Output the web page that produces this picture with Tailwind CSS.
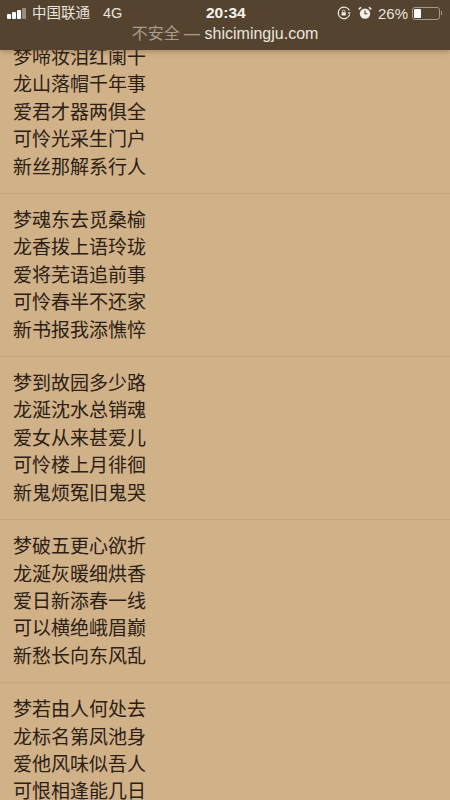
<!DOCTYPE html>
<html lang="zh-CN">
  <head>
    <meta charset="UTF-8" />
    <meta name="viewport" content="width=device-width, initial-scale=1.0" />
    <title>诗词名句</title>
    <script src="https://cdn.jsdelivr.net/npm/@tailwindcss/browser@4"></script>
  </head>
  <body class="bg-[#d1b188] font-['Noto_Sans_CJK_SC','Noto_Sans',sans-serif] antialiased">
    <div class="relative w-[450px] h-[800px] overflow-hidden">
      <!-- browser bar over the page -->
      <div class="absolute top-0 left-0 right-0 z-10 h-[50px] bg-[#54432f] text-[#e9e4dc] shadow-[0_2px_5px_rgba(70,50,30,0.3)]">
        <div class="relative flex items-center h-[26px] pl-[7px] pr-[8px] font-['Liberation_Sans','Noto_Sans_CJK_SC',sans-serif]">
          <div class="flex items-end gap-[1px] w-[20px] h-[12px]">
            <span class="w-[4px] h-[5px] bg-white rounded-[1px]"></span>
            <span class="w-[4px] h-[7px] bg-white rounded-[1px]"></span>
            <span class="w-[4px] h-[9px] bg-white rounded-[1px]"></span>
            <span class="w-[4px] h-[11px] bg-white/40 rounded-[1px]"></span>
          </div>
          <span class="ml-[5px] text-[14.5px] leading-none">中国联通</span>
          <span class="ml-[13px] text-[14.5px] leading-none">4G</span>
          <span class="absolute left-[206px] top-[4px] text-[15.5px] leading-[17px] font-bold text-[#f5f2ee]">20:34</span>
          <div class="ml-auto flex items-center">
            <svg class="w-[14px] h-[14px]" viewBox="0 0 14 14" fill="none">
              <path d="M12.6 8.6A5.8 5.8 0 1 1 12.4 4.6" stroke="#f2eee8" stroke-width="1.2" />
              <path d="M10.6 6.4h3.2L12.2 8.6z" fill="#f2eee8" />
              <rect x="4.6" y="6.2" width="4.2" height="3.4" rx="0.5" fill="#f2eee8" />
              <path d="M5.4 6.2V5.3a1.3 1.3 0 0 1 2.6 0v.9" stroke="#f2eee8" stroke-width="0.8" />
            </svg>
            <svg class="ml-[7px] w-[14px] h-[14px]" viewBox="0 0 14 14" fill="none">
              <circle cx="7" cy="7.6" r="5.2" fill="#f2eee8" />
              <path d="M7 4.6v3.2h2.4" stroke="#54432f" stroke-width="1.1" />
              <path d="M0.8 3.4 3 1.2M13.2 3.4 11 1.2" stroke="#f2eee8" stroke-width="1.6" />
            </svg>
            <span class="ml-[6px] text-[15px] leading-none">26%</span>
            <div class="ml-[4px] flex items-center">
              <div class="w-[28px] h-[13px] rounded-[3px] border border-[#a59b8c] p-[1px]">
                <div class="w-[7px] h-full bg-white rounded-[1px]"></div>
              </div>
              <span class="ml-[1px] w-[1px] h-[4px] bg-[#a59b8c]"></span>
            </div>
          </div>
        </div>
        <div class="text-center text-[16px] leading-[18px] mt-[-1px] font-['Liberation_Sans','Noto_Sans_CJK_SC',sans-serif]">
          <span class="text-[#a89d8e]">不安全 — </span><span class="text-[#ebe6df]">shicimingju.com</span>
        </div>
      </div>

      <!-- poem list, first block scrolled under the bar -->
      <div class="pt-[42px] text-[19px] leading-[27.4px] text-[#2b2015]">
        <div class="pl-[13px] pb-[14px] border-b border-[#c4a57e]">
          <p>梦啼妆泪红阑干</p>
          <p>龙山落帽千年事</p>
          <p>爱君才器两俱全</p>
          <p>可怜光采生门户</p>
          <p>新丝那解系行人</p>
        </div>
        <div class="pl-[13px] pt-[11px] pb-[14px] border-b border-[#c4a57e]">
          <p>梦魂东去觅桑榆</p>
          <p>龙香拨上语玲珑</p>
          <p>爱将芜语追前事</p>
          <p>可怜春半不还家</p>
          <p>新书报我添憔悴</p>
        </div>
        <div class="pl-[13px] pt-[11px] pb-[14px] border-b border-[#c4a57e]">
          <p>梦到故园多少路</p>
          <p>龙涎沈水总销魂</p>
          <p>爱女从来甚爱儿</p>
          <p>可怜楼上月徘徊</p>
          <p>新鬼烦冤旧鬼哭</p>
        </div>
        <div class="pl-[13px] pt-[11px] pb-[14px] border-b border-[#c4a57e]">
          <p>梦破五更心欲折</p>
          <p>龙涎灰暖细烘香</p>
          <p>爱日新添春一线</p>
          <p>可以横绝峨眉巅</p>
          <p>新愁长向东风乱</p>
        </div>
        <div class="pl-[13px] pt-[11px] pb-[14px]">
          <p>梦若由人何处去</p>
          <p>龙标名第凤池身</p>
          <p>爱他风味似吾人</p>
          <p>可恨相逢能几日</p>
        </div>
      </div>
    </div>
  </body>
</html>
